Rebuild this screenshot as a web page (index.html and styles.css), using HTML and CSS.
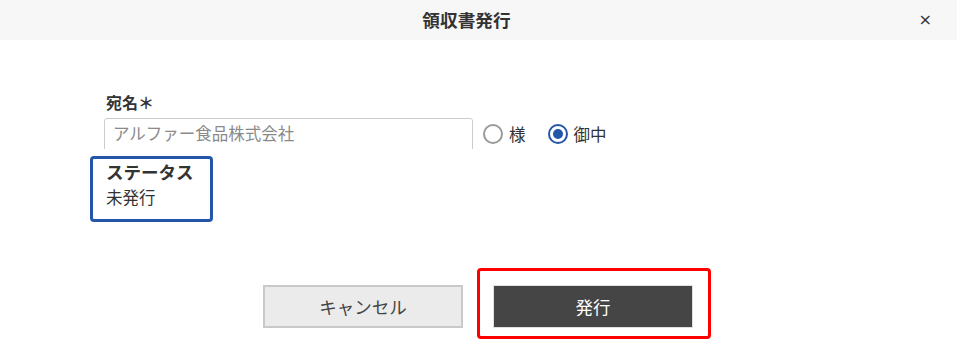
FILE: index.html
```html
<!DOCTYPE html>
<html lang="ja">
<head>
<meta charset="utf-8">
<link rel="stylesheet" href="styles.css">
</head>
<body>
<div class="dialog">
  <header class="head">
    <span></span>
    <h1 class="title">領収書発行</h1>
    <span class="close">×</span>
  </header>
  <main class="body">
    <div class="field">
      <div class="label">宛名<span class="req">＊</span></div>
      <div class="row">
        <div class="input-clip"><input class="input" type="text" placeholder="アルファー食品株式会社"></div>
        <label class="radio"><span class="circle"></span><span>様</span></label>
        <label class="radio"><span class="circle on"></span><span>御中</span></label>
      </div>
    </div>
    <div class="status">
      <div class="status-label">ステータス</div>
      <div class="status-value">未発行</div>
    </div>
    <div class="actions">
      <button class="btn cancel">キャンセル</button>
      <div class="highlight"><button class="btn primary">発行</button></div>
    </div>
  </main>
</div>
</body>
</html>
```
FILE: styles.css
```css
html, body {
  margin: 0;
  padding: 0;
  background: #fff;
}
body {
  font-family: "Noto Sans CJK JP", "Noto Sans", sans-serif;
  color: #333;
  width: 957px;
  height: 358px;
  overflow: hidden;
}
.head {
  height: 40px;
  background: #f7f7f7;
  display: grid;
  grid-template-columns: 1fr auto 1fr;
  align-items: center;
}
.title {
  margin: 0;
  font-size: 17px;
  font-weight: 700;
  line-height: 24px;
  color: #333;
  transform: translateX(-12px) scaleX(1.04);
}
.close {
  justify-self: end;
  margin-right: 25px;
  font-size: 16px;
  line-height: 20px;
  color: #333;
  font-family: "DejaVu Sans", sans-serif;
}
.body {
  padding-top: 50px;
}
.field {
  padding-left: 104px;
}
.label {
  font-size: 16px;
  font-weight: 700;
  line-height: 24px;
  padding-left: 2px;
}
.req {
  font-size: 16px;
  letter-spacing: -2px;
}
.row {
  margin-top: 4px;
  display: flex;
  align-items: center;
}
.input-clip {
  width: 369px;
  height: 31px;
  overflow: hidden;
}
.input {
  box-sizing: border-box;
  width: 369px;
  height: 40px;
  border: 1px solid #ccc;
  border-radius: 3px;
  padding: 0 8px;
  font-family: "Noto Sans CJK JP", sans-serif;
  font-size: 16.5px;
  color: #333;
  outline: none;
  line-height: 30px;
  padding-bottom: 10px;
}
.input::placeholder {
  color: #8a8a8a;
}
.radio {
  display: flex;
  align-items: center;
  gap: 6px;
  font-size: 16.5px;
  line-height: 24px;
  color: #333;
}
.radio:first-of-type {
  margin-left: 10px;
}
.radio + .radio {
  margin-left: 22px;
}
.circle {
  box-sizing: border-box;
  width: 20px;
  height: 20px;
  border: 2px solid #9a9a9a;
  border-radius: 50%;
  display: flex;
  align-items: center;
  justify-content: center;
}
.circle.on {
  border-color: #2356a8;
}
.circle.on::after {
  content: "";
  width: 10px;
  height: 10px;
  border-radius: 50%;
  background: #2356a8;
}
.status {
  box-sizing: border-box;
  margin: 7px 0 0 90px;
  width: 123px;
  height: 66px;
  border: 3px solid #2356a8;
  border-radius: 4px;
  padding-left: 13px;
}
.status-label {
  font-size: 17.5px;
  font-weight: 700;
  line-height: 25px;
}
.status-value {
  font-size: 16.5px;
  line-height: 26px;
}
.actions {
  margin-top: 46px;
  padding-left: 263px;
  display: flex;
  align-items: flex-start;
  gap: 14px;
}
.btn {
  box-sizing: border-box;
  width: 200px;
  height: 43px;
  font-family: "Noto Sans CJK JP", sans-serif;
  font-size: 17.5px;
  cursor: pointer;
  border-radius: 0;
  padding: 0;
}
.cancel {
  margin-top: 17px;
  background: #ebebeb;
  border: 2px solid #c9c9c9;
  color: #444;
}
.highlight {
  width: 234px;
  height: 71px;
  box-sizing: border-box;
  border: 3px solid #ff0000;
  border-radius: 4px;
  padding: 14px 0 0 13px;
}
.primary {
  background: #454545;
  border: 1px solid #e0e0e0;
  color: #fff;
}
```
